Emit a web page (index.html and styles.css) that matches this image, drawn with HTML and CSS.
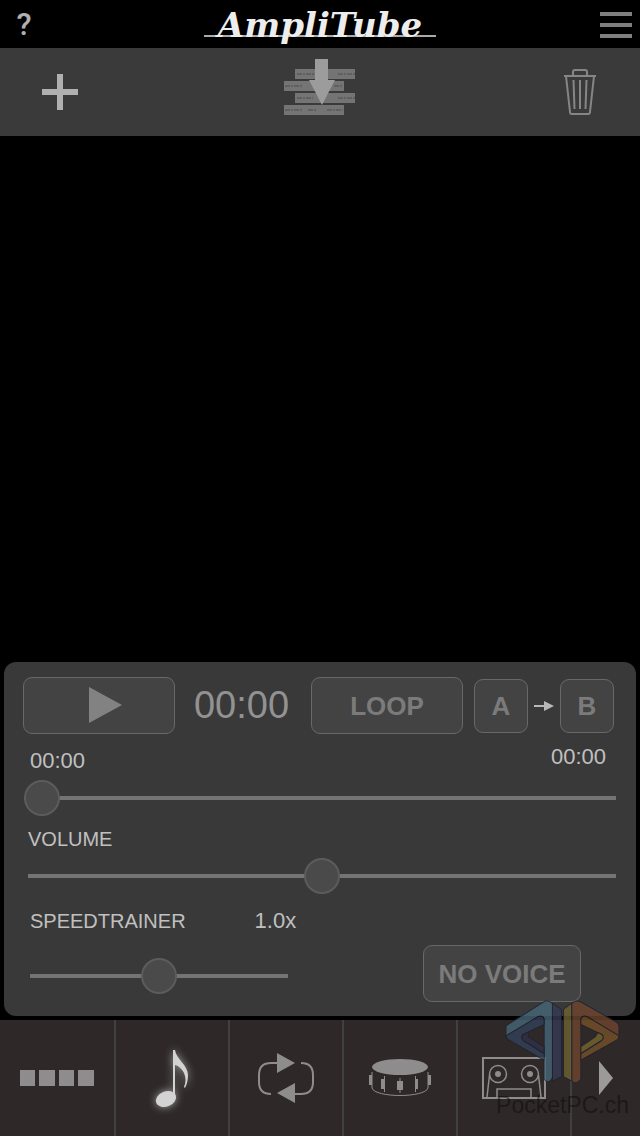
FILE: index.html
```html
<!DOCTYPE html>
<html lang="en">
<head>
<meta charset="utf-8">
<meta name="viewport" content="width=device-width, initial-scale=1">
<title>AmpliTube</title>
<link rel="stylesheet" href="styles.css">
</head>
<body>

<header class="topbar">
  <button class="help" aria-label="Help">?</button>
  <h1 class="logo">AmpliTube</h1>
  <button class="menu" aria-label="Menu">
    <svg width="32" height="26" viewBox="0 0 32 26"><path d="M0 2h32M0 13h32M0 24h32" stroke="#7e807e" stroke-width="4"/></svg>
  </button>
</header>

<div class="toolbar">
  <button class="add" aria-label="Add song">
    <svg width="36" height="36" viewBox="0 0 36 36"><path d="M0 18h36M18 0v36" stroke="#b0b0b0" stroke-width="6"/></svg>
  </button>
  <button class="import" aria-label="Import">
    <svg width="72" height="56" viewBox="0 0 72 56">
      <path d="M11 15h60M0 27h60M11 39h60M0 51h60" stroke="#747474" stroke-width="10"/>
      <g stroke="#606060" stroke-width="2" stroke-dasharray="5 1 2 1">
        <path d="M13 15h18M54 15h17M1 27h17M50 27h8M13 39h16M54 39h17M1 51h17M24 51h9M43 51h16"/>
      </g>
      <path d="M31 0h13v21h7L38 46 25 21h6z" fill="#9c9c9c"/>
    </svg>
  </button>
  <button class="delete" aria-label="Delete">
    <svg width="34" height="48" viewBox="0 0 34 48" fill="none" stroke="#868686" stroke-width="2">
      <path d="M1 8h32M10 7V4q0-2 2-2h10q2 0 2 2v3M3 8l4 36q0 2 2 2h16q2 0 2-2l4-36"/>
      <path d="M10.500 12l1 29M17 12v29M23.500 12l-1 29"/>
    </svg>
  </button>
</div>

<main class="songs"></main>

<section class="player">
  <div class="controls">
    <button class="btn wide" aria-label="Play">
      <svg width="33" height="36" viewBox="0 0 33 36"><path d="M0 0l33 18L0 36z" fill="#828282"/></svg>
    </button>
    <output class="clock">00:00</output>
    <button class="btn wide">LOOP</button>
    <button class="btn square point-a">A</button>
    <svg class="arrow" width="20" height="10" viewBox="0 0 20 10"><path d="M0 4h10V0l10 5-10 5V6H0z" fill="#b8b8b8"/></svg>
    <button class="btn square">B</button>
  </div>

  <div class="times">
    <label class="elapsed" for="position">00:00</label>
    <span>00:00</span>
  </div>
  <input class="slider position" id="position" type="range" min="0" max="100" value="0">

  <label class="caption" for="volume">VOLUME</label>
  <input class="slider volume" id="volume" type="range" min="0" max="100" value="50">

  <div class="speed-head">
    <label for="speed">SPEEDTRAINER</label>
    <output class="rate" for="speed">1.0x</output>
  </div>
  <div class="speed-row">
    <input class="slider speed" id="speed" type="range" min="0" max="2" step="0.1" value="1">
    <button class="btn novoice">NO VOICE</button>
  </div>
</section>

<nav class="tabs">
  <button class="tab" aria-label="Effects">
    <svg width="74" height="16" viewBox="0 0 74 16" fill="#8f8c8d"><path d="M0 0h15v16H0zM19 0h16v16H19zM39 0h15v16H39zM58 0h16v16H58z"/></svg>
  </button>
  <button class="tab active" aria-label="Songs">
    <svg width="34" height="60" viewBox="0 0 34 60" fill="#d3d3d4">
      <ellipse cx="11" cy="51" rx="10.500" ry="7.500" transform="rotate(-22 11 51)"/>
      <path d="M18 2h2c1 9 13 15 13 25 0 5-1 9-3 13l-1-1c2-5 2-9 0-14-2-4-5-7-9-8v32h-2z"/>
    </svg>
  </button>
  <button class="tab" aria-label="Looper">
    <svg width="56" height="50" viewBox="0 0 56 50">
      <path d="M19 10h-6Q1 10 1 22v7q0 12 12 12M43 10q12 0 12 12v7q0 12-12 12h-6" fill="none" stroke="#8f8c8d" stroke-width="2"/>
      <path d="M19 0l18 10-18 10zM37 30v20L19 40z" fill="#8f8c8d"/>
    </svg>
  </button>
  <button class="tab" aria-label="Drums">
    <svg width="62" height="40" viewBox="0 0 62 40" fill="#8f8c8d">
      <ellipse cx="31" cy="9" rx="28" ry="8"/>
      <path d="M3 14v16c3 10 53 10 56 0V14" fill="none" stroke="#8f8c8d" stroke-width="1"/>
      <path d="M0 17h3v10H0zM12 21h4v10h-4zM28 23h6v9h-6zM46 21h3v10h-3zM59 17h3v10h-3z"/>
      <path d="M15.500 18v16M31 20v15M46.500 18v16" stroke="#8f8c8d"/>
    </svg>
  </button>
  <button class="tab" aria-label="Recorder">
    <svg width="64" height="42" viewBox="0 0 64 42" fill="none" stroke="#8f8c8d">
      <rect x="1" y="1" width="62" height="40" stroke-width="2"/>
      <circle cx="16" cy="17" r="8.500" stroke-width="1.500"/>
      <circle cx="48" cy="17" r="8.500" stroke-width="1.500"/>
      <path d="M7.500 18L5 40M56.500 18L59 40M15 40v-8h34v8" stroke-width="1.500"/>
      <circle cx="16" cy="17" r="3" fill="#8f8c8d" stroke="none"/>
      <circle cx="48" cy="17" r="3" fill="#8f8c8d" stroke="none"/>
    </svg>
  </button>
  <button class="tab" aria-label="Next">
    <svg width="14" height="34" viewBox="0 0 14 34"><path d="M0 0l14 17L0 34z" fill="#9c9999"/></svg>
  </button>
</nav>

<div class="watermark">
  <svg width="117" height="85" viewBox="312 208 350 254" stroke="#202330" stroke-width="3" stroke-linejoin="round">
    <!-- blue half -->
    <path d="M318 288L430 217q14-8 27 4v222q-10 22-25 5V268q-3-12-17-8l-97 60z" fill="#466778"/>
    <path d="M457 221l27 18v201l-27 14z" fill="#363b56"/>
    <path d="M318 318l97-58q17-4 17 12v12l-62 30q-10 8 0 18l62 39v20l-108-62q-6-4-6-11z" fill="#34425a"/>
    <path d="M432 350v21l-62-39q-10-10 0-18l15-7v14z" fill="#2e3148"/>
    <!-- orange half -->
    <path d="M490 238l25-18v234l-25-14z" fill="#6e6330"/>
    <path d="M515 221q13-12 27-4l106 60q8 5 8 13v28l-97-58q-14-4-17 8v180q-13 18-27 6z" fill="#70452f"/>
    <path d="M542 268q3-12 17-8l97 58q0 8-6 12l-108 61v-20l62-39q10-10 0-18l-62-30z" fill="#765027"/>
    <path d="M542 371l62-39q10-10 0-18l-11-6-8 13-43 29z" fill="#75662d"/>
  </svg>
  <span class="site">PocketPC.ch</span>
</div>

</body>
</html>
```

FILE: styles.css
```css
* {
  box-sizing: border-box;
}

body {
  margin: 0;
  min-height: 100vh;
  display: flex;
  flex-direction: column;
  position: relative;
  background: #000;
  color: #c0c0c0;
  font-family: "Liberation Sans", Arial, sans-serif;
  font-size: 20px;
}

button {
  padding: 0;
  border: none;
  background: none;
  color: inherit;
  font-family: inherit;
  cursor: pointer;
}

svg {
  display: block;
}

/* top */
.topbar {
  display: grid;
  grid-template-columns: 1fr auto 1fr;
  align-items: center;
  height: 48px;
  padding: 0 8px;
}

.help {
  justify-self: start;
  width: 32px;
  color: #b0b0b0;
  font-family: Roboto, sans-serif;
  font-size: 31px;
  font-weight: 500;
  line-height: 50px;
}

.menu {
  justify-self: end;
}

.logo {
  margin: 0;
  padding: 0 14px;
  background: linear-gradient(#aaa, #aaa) 0 32px / 100% 2px no-repeat;
  color: #ededed;
  font-family: "DejaVu Serif", serif;
  font-size: 34px;
  font-style: italic;
  font-weight: bold;
  line-height: 44px;
}

.toolbar {
  display: grid;
  grid-template-columns: 1fr auto 1fr;
  align-items: center;
  height: 88px;
  padding: 0 43px 0 42px;
  background: #3a3a3a;
}

.add {
  justify-self: start;
}

.import {
  padding-bottom: 10px;
}

.delete {
  justify-self: end;
}

.songs {
  flex: 1;
}

/* player */
.player {
  display: flex;
  flex-direction: column;
  margin: 0 4px 4px;
  padding: 15px 20px 14px 19px;
  border-radius: 12px;
  background: #393939;
}

.controls {
  display: flex;
  align-items: center;
  padding-right: 2px;
}

.btn {
  display: flex;
  align-items: center;
  justify-content: center;
  height: 57px;
  padding-top: 2px;
  border: 1px solid #686868;
  border-radius: 9px;
  background: #434343;
  color: #7b7b7b;
  font-size: 26px;
  font-weight: bold;
}

.wide {
  width: 152px;
}

.wide svg {
  margin: 0 0 4px 12px;
}

.square {
  width: 54px;
  height: 54px;
}

.point-a {
  margin-left: 11px;
}

.arrow {
  margin: 0 6px;
}

.clock {
  flex: 1;
  padding-right: 3px;
  color: #929292;
  font-size: 38px;
  text-align: center;
}

.times {
  display: flex;
  align-items: center;
  justify-content: space-between;
  height: 46px;
  padding: 0 10px 0 7px;
  font-size: 22px;
}

.elapsed {
  padding-top: 8px;
}

.caption {
  padding-left: 5px;
  line-height: 46px;
  height: 42px;
}

.slider {
  -webkit-appearance: none;
  appearance: none;
  height: 36px;
  margin: 0;
  background: none;
}

.slider::-webkit-slider-runnable-track {
  height: 4px;
  background: #747474;
}

.slider::-webkit-slider-thumb {
  -webkit-appearance: none;
  width: 36px;
  height: 36px;
  margin-top: -16px;
  border: 2px solid #5c5c5c;
  border-radius: 50%;
  background: #4a4a4a;
}

.position {
  margin-left: 1px;
}

.volume {
  margin-left: 5px;
}

.speed-head {
  display: flex;
  align-items: center;
  height: 51px;
  padding: 3px 0 0 7px;
}

.rate {
  margin-left: 69px;
  font-size: 22px;
}

.speed-row {
  display: flex;
  align-items: center;
  justify-content: space-between;
  padding: 0 35px 0 7px;
}

.speed {
  width: 258px;
  margin-top: 4px;
}

.novoice {
  width: 158px;
}

/* bottom tabs */
.tabs {
  display: grid;
  grid-template-columns: repeat(5, 1fr) 70px;
  height: 116px;
  background: #2e2828;
}

.tab {
  display: flex;
  align-items: center;
  justify-content: center;
}

.tab + .tab {
  border-left: 2px solid #414040;
}

.active svg {
  overflow: visible;
  filter: drop-shadow(0 0 4px #aaa);
}

.watermark {
  position: absolute;
  right: 11px;
  bottom: 10px;
  display: flex;
  flex-direction: column;
  align-items: center;
  pointer-events: none;
}

.watermark svg {
  opacity: 0.8;
}

.site {
  color: rgba(10, 8, 10, 0.5);
  font-size: 23px;
  line-height: 42px;
}
```
